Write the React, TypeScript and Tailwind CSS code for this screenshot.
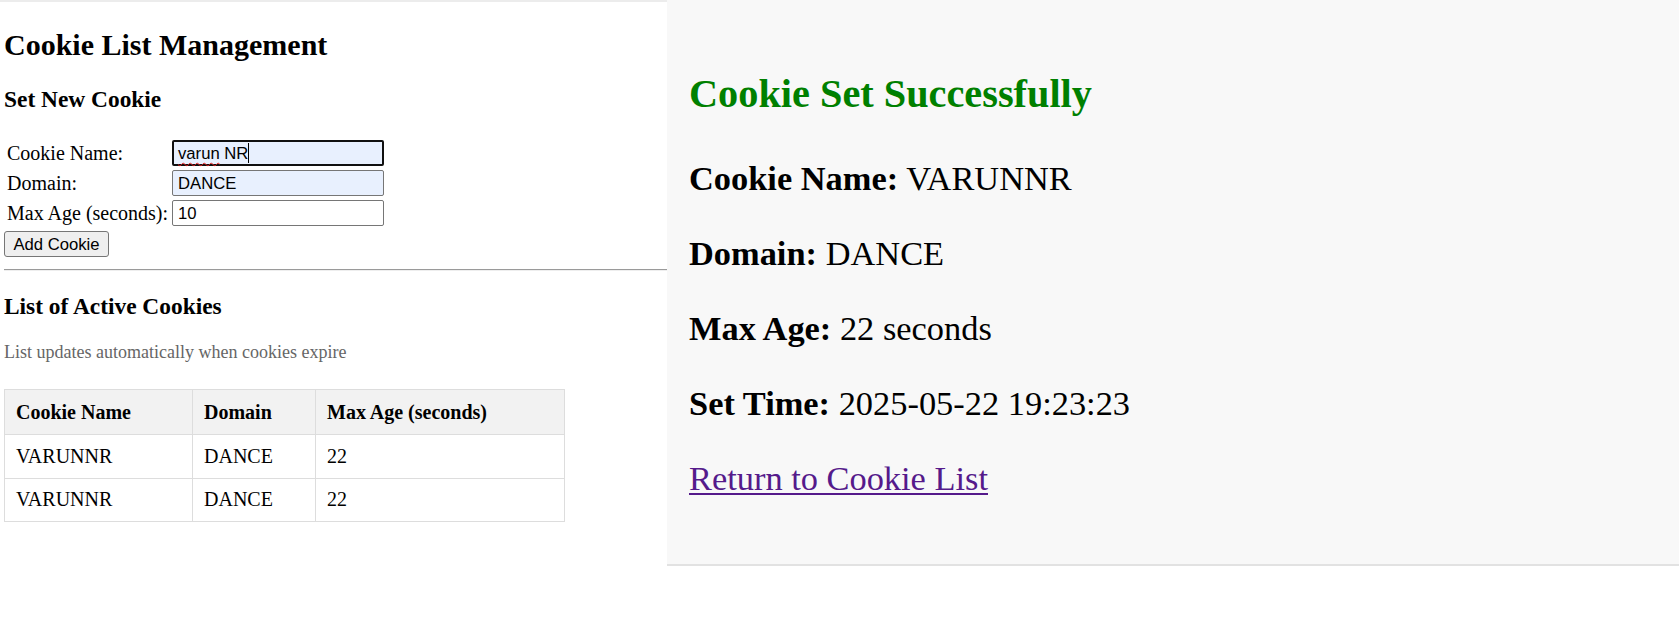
const serif = { fontFamily: '"Liberation Serif", "Times New Roman", serif' };

const cookies = [
  { name: "VARUNNR", domain: "DANCE", maxAge: 22 },
  { name: "VARUNNR", domain: "DANCE", maxAge: 22 },
];

function FakeInput({ children, focused, filled }: { children: React.ReactNode; focused?: boolean; filled?: boolean }) {
  return (
    <div
      className={`h-[26px] w-[212px] rounded-[2px] flex items-center text-[16.67px] text-black font-['Liberation_Sans',Arial,sans-serif] ${
        focused ? "border-2 border-[#101010] px-[4px]" : "border border-[#767676] px-[5px]"
      } ${filled ? "bg-[#e8f0fe]" : "bg-white"}`}
    >
      {children}
    </div>
  );
}

function SetCookieForm() {
  return (
    <>
      <div className="mt-[27px] ml-[3px] grid grid-cols-[161px_212px] gap-x-[4px] gap-y-[4px] items-center text-[20px] leading-[23px] whitespace-nowrap">
        <span>Cookie Name:</span>
        <FakeInput focused filled>
          <span className="underline decoration-wavy decoration-[#e01b1b] decoration-1 underline-offset-[3px]">varun</span>
          <span>&nbsp;NR</span>
          <span className="inline-block w-px h-[20px] bg-black" />
        </FakeInput>
        <span>Domain:</span>
        <FakeInput filled>DANCE</FakeInput>
        <span>Max Age (seconds):</span>
        <FakeInput>10</FakeInput>
      </div>
      <button className="mt-[5px] h-[26px] w-[105px] rounded-[3px] border border-[#767676] bg-[#efefef] text-[16.67px] text-black font-['Liberation_Sans',Arial,sans-serif]">
        Add Cookie
      </button>
    </>
  );
}

function CookieTable() {
  return (
    <table className="mt-[26px] border-collapse text-[20px] leading-[23px]">
      <thead>
        <tr className="bg-[#f2f2f2] h-[45px]">
          <th className="w-[188px] border border-[#ddd] pl-[11px] text-left font-bold">Cookie Name</th>
          <th className="w-[123px] border border-[#ddd] pl-[11px] text-left font-bold">Domain</th>
          <th className="w-[249px] border border-[#ddd] pl-[11px] text-left font-bold">Max Age (seconds)</th>
        </tr>
      </thead>
      <tbody>
        {cookies.map((c, i) => (
          <tr key={i} className="h-[43.5px]">
            <td className="border border-[#ddd] pl-[11px]">{c.name}</td>
            <td className="border border-[#ddd] pl-[11px]">{c.domain}</td>
            <td className="border border-[#ddd] pl-[11px]">{c.maxAge}</td>
          </tr>
        ))}
      </tbody>
    </table>
  );
}

function CookieListPage() {
  return (
    <div className="w-[667px] shrink-0 bg-white text-black" style={serif}>
      <div className="h-[2px] bg-[#ececec]" />
      <div className="pl-1">
        <h2 className="mt-[26px] text-[30px] leading-[34px] font-bold">Cookie List Management</h2>
        <h3 className="mt-[24px] text-[23.4px] leading-[27px] font-bold">Set New Cookie</h3>
        <SetCookieForm />
        <div className="mt-[12px] h-[2px] border-t border-[#9a9a9a] border-b border-b-[#eeeeee]" />
        <h3 className="mt-[22px] text-[23.4px] leading-[27px] font-bold">List of Active Cookies</h3>
        <p className="mt-[22px] text-[18px] leading-[21px] text-[#666]">List updates automatically when cookies expire</p>
        <CookieTable />
      </div>
    </div>
  );
}

function SuccessPage() {
  const rows: [string, string][] = [
    ["Cookie Name:", "VARUNNR"],
    ["Domain:", "DANCE"],
    ["Max Age:", "22 seconds"],
    ["Set Time:", "2025-05-22 19:23:23"],
  ];
  return (
    <div className="flex-1 self-start h-[566px] bg-[#f8f8f8] border-b-2 border-[#e2e2e2] pl-[22px] text-black" style={serif}>
      <h1 className="mt-[71px] text-[40.3px] leading-[46px] font-bold text-[#008000]">Cookie Set Successfully</h1>
      <div className="mt-[42px] flex flex-col gap-[36px] text-[34.4px] leading-[39px]">
        {rows.map(([label, value]) => (
          <p key={label}>
            <strong className="font-bold">{label}</strong> {value}
          </p>
        ))}
        <p>
          <a href="#" className="text-[#551a8b] underline decoration-2 underline-offset-[3px]">
            Return to Cookie List
          </a>
        </p>
      </div>
    </div>
  );
}

export default function App() {
  return (
    <div className="w-[1679px] h-[642px] flex bg-white overflow-hidden">
      <CookieListPage />
      <SuccessPage />
    </div>
  );
}
